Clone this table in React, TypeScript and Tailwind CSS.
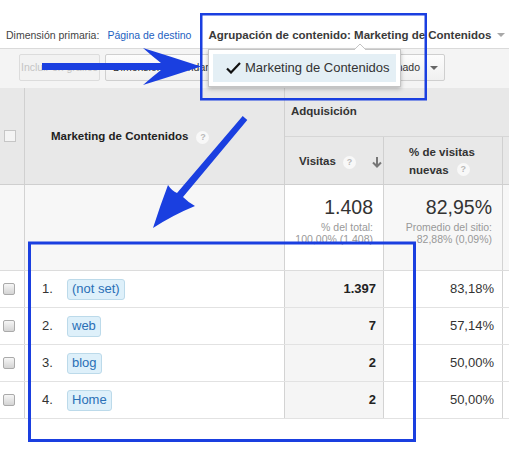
import React from "react";

function Help({ className = "" }: { className?: string }) {
  return (
    <span
      className={
        "inline-flex h-[13px] w-[13px] items-center justify-center rounded-full bg-[#f8f8f8] text-[9px] font-bold leading-none text-[#b8b8b8] " +
        className
      }
    >
      ?
    </span>
  );
}

function Caret({ color = "#888" }: { color?: string }) {
  return (
    <svg width="8" height="4" viewBox="0 0 8 4">
      <path d="M0 0 L8 0 L4 4 Z" fill={color} />
    </svg>
  );
}

const rows = [
  { n: "1.", tag: "(not set)", v: "1.397", p: "83,18%" },
  { n: "2.", tag: "web", v: "7", p: "57,14%" },
  { n: "3.", tag: "blog", v: "2", p: "50,00%" },
  { n: "4.", tag: "Home", v: "2", p: "50,00%" },
];

export default function App() {
  return (
    <div className="relative h-[461px] w-[509px] overflow-hidden bg-white font-['Liberation_Sans',Arial,sans-serif] text-[#333]">
      {/* top bar */}
      <div className="flex h-[48px] items-start whitespace-nowrap pl-[6px] pt-[27px] text-[10.5px] leading-[16px]">
        <span className="text-[#444]">Dimensión primaria:</span>
        <span className="ml-[8px] text-[#1d5fbf]">Página de destino</span>
        <span className="ml-[17px] text-[11.5px] font-bold text-[#3a3a3a]">
          Agrupación de contenido: Marketing de Contenidos
        </span>
        <span className="ml-[5px] mt-[6px]">
          <Caret color="#a8a8a8" />
        </span>
      </div>

      {/* toolbar */}
      <div className="flex h-[40px] items-start whitespace-nowrap border-t border-[#dadada] bg-[#f4f4f4] pl-[19px] pt-[5px] text-[10.5px]">
        <div className="flex h-[27px] w-[81px] items-center justify-center rounded-[2px] border border-[#dcdcdc] bg-[#f2f2f2] text-[#c4c4c4]">
          Incluir en gráfico
        </div>
        <div className="ml-[5px] flex h-[27px] w-[120px] items-center rounded-[2px] border border-[#cfcfcf] bg-linear-to-b from-[#fcfcfc] to-[#f0f0f0] pl-[7px] text-[#333]">
          Dimensión secundaria
          <span className="ml-[6px]">
            <Caret color="#666" />
          </span>
        </div>
        <div className="ml-[12px] flex h-[27px] w-[100px] items-center text-[#444]">Tipo de orden:</div>
        <div className="flex h-[27px] w-[108px] items-center justify-end rounded-[2px] border border-[#cfcfcf] bg-linear-to-b from-[#fcfcfc] to-[#f0f0f0] pr-[6px] text-[#333]">
          Predeterminado
          <span className="ml-[10px]">
            <Caret color="#666" />
          </span>
        </div>
      </div>

      {/* table header */}
      <div className="grid grid-cols-[25px_260px_99px_119px_1fr] border-b border-[#cfcfcf] bg-[#e8e8e8]">
        <div className="row-span-2 flex items-center border-r border-[#d0d0d0] pl-[4px]">
          <span className="h-[12px] w-[12px] border border-[#c6c6c6] bg-[#f4f4f4]" />
        </div>
        <div className="row-span-2 flex items-center border-r border-[#d0d0d0] pl-[26px] pt-[2px] text-[11.5px] font-bold text-[#222]">
          Marketing de Contenidos
          <Help className="ml-[8px]" />
        </div>
        <div className="col-span-3 flex h-[49px] items-center border-b border-[#d6d6d6] pl-[6px] text-[11.5px] font-bold text-[#333]">
          Adquisición
        </div>
        <div className="flex h-[47px] items-center border-r border-[#d0d0d0] pl-[14px] pt-[3px] text-[11.5px] font-bold text-[#333]">
          Visitas
          <Help className="ml-[7px]" />
          <svg className="ml-[16px]" width="10" height="11" viewBox="0 0 10 11">
            <path d="M5 0 L5 9" stroke="#777" strokeWidth="2" />
            <path d="M1 5.5 L5 9.5 L9 5.5" stroke="#777" strokeWidth="2" fill="none" />
          </svg>
        </div>
        <div className="flex h-[47px] flex-col justify-center border-r border-[#d0d0d0] pl-[25px] text-[11.5px] font-bold leading-[18px] text-[#333]">
          <span>% de visitas</span>
          <span className="flex items-center">
            nuevas
            <Help className="ml-[8px]" />
          </span>
        </div>
        <div className="h-[47px]" />
      </div>

      {/* summary row */}
      <div className="grid h-[86px] grid-cols-[25px_260px_99px_119px_1fr] border-b border-[#dcdcdc]">
        <div className="border-r border-[#d3d3d3] bg-[#f7f7f7]" />
        <div className="border-r border-[#d3d3d3] bg-[#f7f7f7]" />
        <div className="flex flex-col items-end border-r border-[#d3d3d3] bg-white pr-[10px] pt-[11px]">
          <span className="text-[19.5px] leading-[23px] text-[#333]">1.408</span>
          <span className="mt-[2px] text-[10.5px] leading-[12px] text-[#999]">% del total:</span>
          <span className="text-[10.5px] leading-[12px] text-[#999]">100,00% (1.408)</span>
        </div>
        <div className="flex flex-col items-end border-r border-[#d3d3d3] bg-[#f7f7f7] pr-[10px] pt-[11px]">
          <span className="text-[19.5px] leading-[23px] text-[#333]">82,95%</span>
          <span className="mt-[2px] text-[10.5px] leading-[12px] text-[#999]">Promedio del sitio:</span>
          <span className="text-[10.5px] leading-[12px] text-[#999]">82,88% (0,09%)</span>
        </div>
        <div className="bg-[#f7f7f7]" />
      </div>

      {/* data rows */}
      {rows.map((r) => (
        <div
          key={r.n}
          className="grid h-[37px] grid-cols-[25px_260px_99px_119px_1fr] border-b border-[#e2e2e2] text-[13px]"
        >
          <div className="flex items-center border-r border-[#d3d3d3] pl-[3px]">
            <span className="h-[12px] w-[12px] rounded-[2px] border border-[#aaaaaa] bg-linear-to-b from-[#f6f6f6] to-[#d4d4d4]" />
          </div>
          <div className="flex items-center border-r border-[#d3d3d3] pl-[17px]">
            <span className="w-[25px] text-[#333]">{r.n}</span>
            <span className="flex h-[21px] items-center rounded-[3px] border border-[#bcdaea] bg-[#def0fa] px-[4px] text-[#2a6fb6]">
              {r.tag}
            </span>
          </div>
          <div className="flex items-center justify-end border-r border-[#d3d3d3] bg-[#f5f5f5] pr-[7px] font-bold text-[#222]">
            {r.v}
          </div>
          <div className="flex items-center justify-end border-r border-[#d3d3d3] pr-[8px] text-[#333]">
            {r.p}
          </div>
          <div />
        </div>
      ))}

      {/* dropdown menu */}
      <div className="absolute left-[208px] top-[49px] h-[38px] w-[193px] border border-[#c4c4c4] bg-white p-[4px] shadow-[0_2px_4px_rgba(0,0,0,0.25)]">
        <div className="flex h-full items-center bg-[#e4eff5] pl-[13px] text-[13px] text-[#333]">
          <svg width="15" height="12" viewBox="0 0 15 12">
            <path d="M1 6.5 L5 10.5 L14 1" stroke="#111" strokeWidth="2.2" fill="none" />
          </svg>
          <span className="ml-[4px]">Marketing de Contenidos</span>
        </div>
      </div>
      <svg className="pointer-events-none absolute left-[354px] top-[43px]" width="12" height="7" viewBox="0 0 12 7">
        <path d="M0 7 L6 1 L12 7" fill="white" stroke="#c4c4c4" strokeWidth="1" />
      </svg>

      {/* annotations */}
      <svg className="pointer-events-none absolute left-0 top-0" width="509" height="461" viewBox="0 0 509 461">
        <rect x="201.25" y="14.25" width="224.5" height="85" fill="none" stroke="#1a3fe0" strokeWidth="2.5" />
        <rect x="29.5" y="243" width="385" height="197.5" fill="none" stroke="#1a3fe0" strokeWidth="3" />
        <path
          d="M42 63 L161 63 Q152 56 143 48 Q172 57 201 66.5 Q172 76 143 85 Q152 77 161 70 L42 70 Z"
          fill="#1a3fe0"
        />
        <path
          d="M242.7 116.1 L247.3 119.9 L183 197 Q189 203 195 206 Q173 215 153 228 Q160 206 168 185 Q172 191 177 193 Z"
          fill="#1a3fe0"
        />
      </svg>
    </div>
  );
}
